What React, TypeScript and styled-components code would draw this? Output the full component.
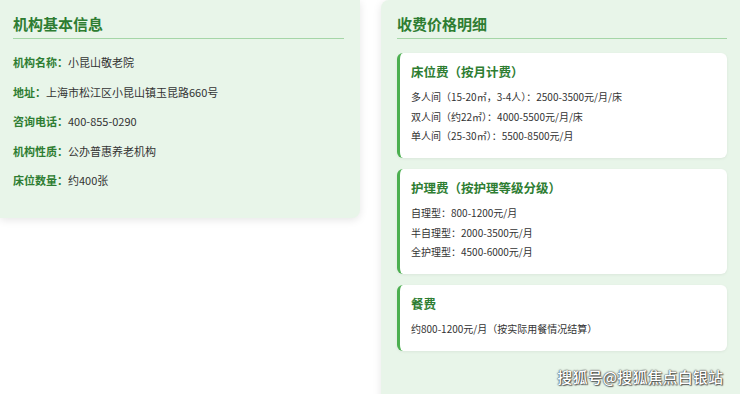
import styled, { createGlobalStyle } from "styled-components";

const GlobalStyle = createGlobalStyle`
    html, body {
        margin: 0;
        padding: 0;
        background: #ffffff;
        overflow: hidden;
        font-family: "Noto Sans CJK SC", "Noto Sans", sans-serif;
    }
`

const Page = styled.div`
    position: relative;
    display: grid;
    grid-template-columns: 360px 359px;
    column-gap: 21px;
    align-items: start;
    width: 740px;
    height: 394px;
    overflow: hidden;
`

const Card = styled.section<{ $side: "left" | "right" }>`
    background-color: #e8f5e9;
    padding: ${(p) => (p.$side === "left" ? "13px 16px 18px 13px" : "13px 13px 60px 16px")};
    border-radius: ${(p) => (p.$side === "left" ? "0 0 8px 0" : "8px 0 0 0")};
    box-shadow: 0 2px 8px rgba(0, 0, 0, 0.1);
`

const Title = styled.h2<{ $gap: number }>`
    margin: 0 0 ${(p) => p.$gap}px;
    padding-bottom: 3px;
    border-bottom: 1px solid #a5d6a7;
    font-size: 15px;
    line-height: 22px;
    font-weight: 700;
    color: #2e7d32;
`

const InfoRow = styled.p`
    margin: 0 0 9.6px;
    font-size: 11px;
    line-height: 20px;
    color: #333333;
`

const Label = styled.strong`
    color: #2e7d32;
    font-weight: 700;
`

const FeeList = styled.div`
    display: flex;
    flex-direction: column;
    gap: 11px;
`

const FeeCard = styled.div`
    background: #ffffff;
    border-left: 3px solid #4caf50;
    border-radius: 6px;
    padding: 9px 14px 12.5px 11px;
    box-shadow: 0 1px 3px rgba(0, 0, 0, 0.06);
`

const FeeTitle = styled.h3`
    margin: 0 0 5px;
    font-size: 12.5px;
    line-height: 20px;
    font-weight: 700;
    color: #2e7d32;
`

const FeeItem = styled.div`
    font-size: 10px;
    line-height: 19.5px;
    color: #333333;
`

const Watermark = styled.div`
    position: absolute;
    right: 17px;
    bottom: 7px;
    font-size: 15px;
    line-height: 20px;
    font-weight: 500;
    color: #ffffff;
    text-shadow: 0 0 1px #333, 0 0 2px rgba(0, 0, 0, 0.7), 1px 1px 1px rgba(0, 0, 0, 0.5);
    letter-spacing: 0.1px;
`

const info = [
    ["机构名称", "小昆山敬老院"],
    ["地址", "上海市松江区小昆山镇玉昆路660号"],
    ["咨询电话", "400-855-0290"],
    ["机构性质", "公办普惠养老机构"],
    ["床位数量", "约400张"],
]

const fees = [
    {
        title: "床位费（按月计费）",
        items: [
            "多人间（15-20㎡，3-4人）：2500-3500元/月/床",
            "双人间（约22㎡）：4000-5500元/月/床",
            "单人间（25-30㎡）：5500-8500元/月",
        ],
    },
    {
        title: "护理费（按护理等级分级）",
        items: ["自理型：800-1200元/月", "半自理型：2000-3500元/月", "全护理型：4500-6000元/月"],
    },
    {
        title: "餐费",
        items: ["约800-1200元/月（按实际用餐情况结算）"],
    },
]

const App = () => {
    return (
        <>
            <GlobalStyle />
            <Page>
                <Card $side="left">
                    <Title $gap={13}>机构基本信息</Title>
                    {info.map(([k, v]) => (
                        <InfoRow key={k}>
                            <Label>{k}：</Label>{v}
                        </InfoRow>
                    ))}
                </Card>
                <Card $side="right">
                    <Title $gap={14}>收费价格明细</Title>
                    <FeeList>
                        {fees.map((f) => (
                            <FeeCard key={f.title}>
                                <FeeTitle>{f.title}</FeeTitle>
                                {f.items.map((it) => (
                                    <FeeItem key={it}>{it}</FeeItem>
                                ))}
                            </FeeCard>
                        ))}
                    </FeeList>
                </Card>
                <Watermark>搜狐号@搜狐焦点白银站</Watermark>
            </Page>
        </>
    )
}

export default App
